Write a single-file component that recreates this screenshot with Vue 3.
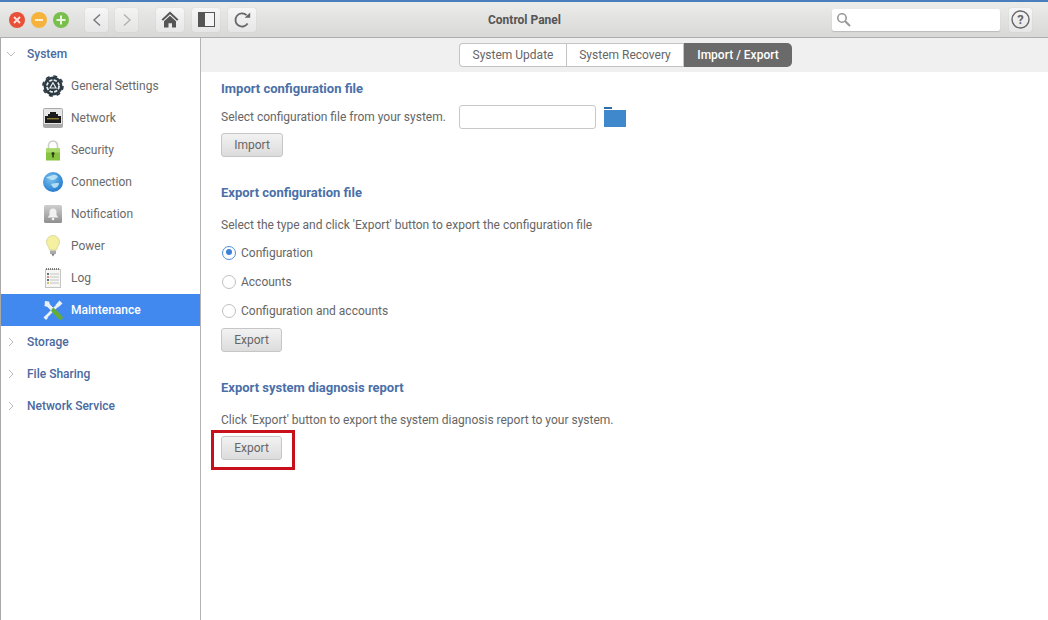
<script setup>
const items = [
  { key: 'gear', label: 'General Settings' },
  { key: 'net', label: 'Network' },
  { key: 'lock', label: 'Security' },
  { key: 'globe', label: 'Connection' },
  { key: 'bell', label: 'Notification' },
  { key: 'bulb', label: 'Power' },
  { key: 'log', label: 'Log' },
  { key: 'tools', label: 'Maintenance', active: true },
]
const groups = ['Storage', 'File Sharing', 'Network Service']
const radios = [
  { label: 'Configuration', on: true },
  { label: 'Accounts', on: false },
  { label: 'Configuration and accounts', on: false },
]
</script>

<template>
  <div class="app">
    <header class="top">
      <div class="lights">
        <svg width="16" height="16" viewBox="0 0 16 16"><circle cx="8" cy="8" r="8" fill="#e8503a"/><path d="M5 5l6 6M11 5l-6 6" stroke="#fbe3dd" stroke-width="1.800"/></svg>
        <svg width="16" height="16" viewBox="0 0 16 16"><circle cx="8" cy="8" r="8" fill="#f5b33c"/><path d="M4 8h8" stroke="#fdf0d2" stroke-width="2"/></svg>
        <svg width="16" height="16" viewBox="0 0 16 16"><circle cx="8" cy="8" r="8" fill="#79bf4c"/><path d="M3.500 8h9M8 3.500v9" stroke="#eaf6df" stroke-width="2"/></svg>
      </div>
      <div class="tool nav first"><svg width="10" height="14" viewBox="0 0 10 14"><path d="M8 1.500L2 7l6 5.500" fill="none" stroke="#777" stroke-width="1.400"/></svg></div>
      <div class="tool nav second"><svg width="10" height="14" viewBox="0 0 10 14"><path d="M2 1.500L8 7l-6 5.500" fill="none" stroke="#aaa" stroke-width="1.400"/></svg></div>
      <div class="tool wide home"><svg width="18" height="17" viewBox="0 0 18 17"><path d="M9 0.500L0.500 8.500 2 9.800 9 3.300l7 6.500 1.500-1.300z" fill="#555"/><path d="M3 10.200L9 4.800l6 5.400V16.500h-4v-4.200H7.500v4.200H3z" fill="#555"/></svg></div>
      <div class="tool wide"><svg width="17" height="15" viewBox="0 0 17 15"><rect x="0" y="0" width="17" height="15" fill="#555"/><rect x="7" y="1" width="9" height="13" fill="#f4f4f4"/></svg></div>
      <div class="tool wide"><svg width="17" height="16" viewBox="0 0 17 16"><path d="M13.600 11.600A6.600 6.600 0 1 1 12.600 3.200" fill="none" stroke="#666" stroke-width="1.800"/><path d="M10.600 5.800h5.600V0.400z" fill="#666"/></svg></div>
      <div class="title">Control Panel</div>
      <div class="search">
        <svg width="15" height="15" viewBox="0 0 15 15"><circle cx="6" cy="6" r="4.200" fill="none" stroke="#999" stroke-width="1.600"/><path d="M9.200 9.200L14 14" stroke="#999" stroke-width="2"/></svg>
      </div>
      <div class="tool help"><svg width="19" height="19" viewBox="0 0 19 19"><circle cx="9.500" cy="9.500" r="8.500" fill="none" stroke="#666" stroke-width="1.400"/><text x="9.500" y="13.800" text-anchor="middle" class="q">?</text></svg></div>
    </header>

    <div class="body">
      <aside class="side">
        <div class="group">
          <svg class="chev" width="10" height="10" viewBox="0 0 10 10"><path d="M1 3l4 4 4-4" fill="none" stroke="#bbb"/></svg>
          <span>System</span>
        </div>
        <div v-for="it in items" :key="it.key" class="item" :class="{ active: it.active }">
          <span class="ico">
            <svg v-if="it.key === 'gear'" width="22" height="22" viewBox="0 0 22 22">
              <circle cx="11" cy="11" r="9.500" fill="#2c3a44"/>
              <circle cx="11" cy="11" r="10" fill="none" stroke="#2c3a44" stroke-width="1.600" stroke-dasharray="4 3.850"/>
              <circle cx="11" cy="11" r="6" fill="none" stroke="#e8ecef" stroke-width="1.800" stroke-dasharray="3.300 1.410"/>
              <path d="M11 7.800l3 5.200H8z" fill="none" stroke="#e8ecef" stroke-width="1.200"/>
            </svg>
            <svg v-else-if="it.key === 'net'" width="20" height="20" viewBox="0 0 20 20"><rect x="0.500" y="0.500" width="19" height="19" rx="1" fill="#e6e6e6" stroke="#aaa"/><path d="M2 8h3V6h2V4h6v2h2v2h3v7H2z" fill="#1b1b1b"/><rect x="4" y="10" width="12" height="1.400" fill="#8c7a32"/><rect x="1" y="16" width="18" height="3" fill="#a8a8a8"/></svg>
            <svg v-else-if="it.key === 'lock'" width="16" height="21" viewBox="0 0 16 21"><path d="M3.500 9V5.500a4.500 4.500 0 0 1 9 0V9" fill="none" stroke="#c9cfc4" stroke-width="1.600"/><rect x="1" y="8.500" width="14" height="12" fill="#86c341"/><rect x="1" y="8.500" width="14" height="4" fill="#a9d96a"/><circle cx="8" cy="13.500" r="1.500" fill="#2c3a18"/><rect x="7.200" y="14" width="1.600" height="3.500" fill="#2c3a18"/></svg>
            <svg v-else-if="it.key === 'globe'" width="20" height="20" viewBox="0 0 20 20"><defs><radialGradient id="gl" cx=".4" cy=".35" r=".7"><stop offset="0" stop-color="#7cc4ee"/><stop offset="1" stop-color="#1f78cf"/></radialGradient></defs><circle cx="10" cy="10" r="10" fill="url(#gl)"/><path d="M3 6c2-2 5-2 7-3 2-.5 4 0 5 2-2 1-3 3-5 3-3 0-4-2-7-2zM8 12c2-1 5-1 8-1 0 3-2 4-4 5-2 0-3-2-4-4z" fill="#c6e8f6" opacity=".85"/></svg>
            <svg v-else-if="it.key === 'bell'" width="18" height="18" viewBox="0 0 18 18"><defs><linearGradient id="bellg" x1="0" y1="0" x2="0" y2="1"><stop offset="0" stop-color="#cfcfcf"/><stop offset="1" stop-color="#8f8f8f"/></linearGradient></defs><rect width="18" height="18" rx="1.500" fill="url(#bellg)"/><path d="M9 3.500a3.500 3.500 0 0 1 3.500 3.500v3l1.800 2.500H3.700L5.500 10V7A3.500 3.500 0 0 1 9 3.500z" fill="#f2f2f2"/><circle cx="9" cy="14" r="1.300" fill="#f2f2f2"/></svg>
            <svg v-else-if="it.key === 'bulb'" width="14" height="22" viewBox="0 0 14 22"><path d="M7 0.500a6.500 6.500 0 0 1 6.500 6.500c0 3-2.500 4.500-3 8h-7c-.5-3.500-3-5-3-8A6.500 6.500 0 0 1 7 .5z" fill="#f4f0a0" stroke="#cfcd8a" stroke-width=".7"/><rect x="4" y="15.500" width="6" height="3.500" fill="#aaa"/><path d="M5.500 19h3l-1.500 2.500z" fill="#777"/></svg>
            <svg v-else-if="it.key === 'log'" width="16" height="20" viewBox="0 0 16 20"><rect x="0.500" y="1.500" width="15" height="18" fill="#f6f6f2" stroke="#c5c5c5"/><path d="M1 1h14" stroke="#777" stroke-dasharray="1 1" stroke-width="2"/><path d="M5 6h9M5 9h9M5 12h9M5 15h9" stroke="#c4c4c4"/><path d="M2 6h2" stroke="#345" stroke-width="1.500"/><path d="M2 9h2" stroke="#c66" stroke-width="1.500"/><path d="M2 12h2" stroke="#345" stroke-width="1.500"/><path d="M2 15h2" stroke="#ca3" stroke-width="1.500"/></svg>
            <svg v-else width="22" height="22" viewBox="0 0 22 22">
              <path d="M3 2l4 .5 1 3 5 5-2.500 2.500-5-5-3-1z" fill="#eaf1f5"/>
              <path d="M3.500 18.500L15 7" stroke="#eaf1f5" stroke-width="2.600"/>
              <path d="M13.500 6l4-4.500 3 3-4.500 4z" fill="#eaf1f5"/>
              <path d="M1.500 18.500l2-2 2.500 2.500-2 2z" fill="#eaf1f5"/>
              <path d="M11.500 11.500L18.500 18.500" stroke="#62ad35" stroke-width="4.500" stroke-linecap="round"/>
            </svg>
          </span>
          <span>{{ it.label }}</span>
        </div>
        <div v-for="g in groups" :key="g" class="group">
          <svg class="chev" width="10" height="10" viewBox="0 0 10 10"><path d="M3 1l4 4-4 4" fill="none" stroke="#bbb"/></svg>
          <span>{{ g }}</span>
        </div>
      </aside>

      <main class="main">
        <div class="tabbar">
          <div class="tabs">
            <div class="tab t1">System Update</div>
            <div class="tab t2">System Recovery</div>
            <div class="tab t3">Import / Export</div>
          </div>
        </div>
        <div class="content">
          <h2 class="h h1">Import configuration file</h2>
          <div class="filerow">
            <span class="txt">Select configuration file from your system.</span>
            <span class="field"></span>
            <svg width="22" height="20" viewBox="0 0 22 20"><rect x="0" y="0" width="8" height="2" fill="#2f6ca8"/><rect x="0" y="3" width="22" height="17" fill="#3f88cc"/></svg>
          </div>
          <button class="btn wide-b">Import</button>

          <h2 class="h h2">Export configuration file</h2>
          <p class="txt p1">Select the type and click 'Export' button to export the configuration file</p>
          <label v-for="r in radios" :key="r.label" class="radio">
            <span class="dot" :class="{ on: r.on }"></span>
            <span class="txt">{{ r.label }}</span>
          </label>
          <button class="btn b2">Export</button>

          <h2 class="h h3">Export system diagnosis report</h2>
          <p class="txt p2">Click 'Export' button to export the system diagnosis report to your system.</p>
          <div class="marked">
            <button class="btn">Export</button>
            <span class="redbox"></span>
          </div>
        </div>
      </main>
    </div>
  </div>
</template>

<style>
html, body { margin: 0; background: #fff; }
</style>

<style scoped>
.app {
  width: 1048px;
  height: 620px;
  overflow: hidden;
  display: flex;
  flex-direction: column;
  font-family: Roboto, "Liberation Sans", sans-serif;
  font-size: 12px;
  color: #666;
}
.top {
  flex: none;
  border-top: 2px solid #4a7fbd;
  border-bottom: 1px solid #aeaeae;
  box-sizing: content-box;
  height: 35px;
  background: linear-gradient(#ececea, #d8d8d6);
  display: flex;
  align-items: center;
  position: relative;
}
.lights {
  display: flex;
  gap: 6px;
  margin-left: 9px;
  margin-right: 16px;
}
.tool {
  height: 24px;
  background: linear-gradient(#f6f6f6, #e6e6e6);
  border-radius: 3px;
  box-shadow: 0 0 1px #bbb;
  display: flex;
  align-items: center;
  justify-content: center;
  flex: none;
}
.nav { width: 23px; }
.second { margin-left: 7px; opacity: 0.85; }
.wide { width: 28px; margin-left: 8px; }
.home { margin-left: 18px; }
.title {
  position: absolute;
  left: 1px;
  right: 0;
  text-align: center;
  font-weight: 700;
  font-size: 12px;
  color: #555;
  pointer-events: none;
}
.search {
  margin-left: auto;
  width: 168px;
  height: 22px;
  background: #fff;
  border-radius: 2px;
  box-shadow: 0 1px 1px #bbb;
  display: flex;
  align-items: center;
  padding-left: 4px;
  box-sizing: border-box;
}
.help { width: 23px; margin-left: 9px; margin-right: 16px; }
.q { font: 700 13px Roboto, sans-serif; fill: #666; }
.body { flex: 1; display: flex; min-height: 0; }
.side {
  width: 200px;
  flex: none;
  box-sizing: border-box;
  border-left: 1px solid #a8a8a8;
}
.group {
  height: 32px;
  display: flex;
  align-items: center;
  color: #4a6a9f;
  font-weight: 500;
}
.chev { margin-left: 5px; margin-right: 11px; flex: none; }
.item {
  height: 32px;
  display: flex;
  align-items: center;
  color: #6a6a6a;
}
.ico {
  width: 24px;
  margin-left: 40px;
  margin-right: 6px;
  display: flex;
  align-items: center;
  justify-content: center;
  flex: none;
}
.item.active { background: #4289ef; color: #fff; font-weight: 500; }
.main {
  flex: 1;
  min-width: 0;
  border-left: 1px solid #b4b4b4;
  display: flex;
  flex-direction: column;
}
.tabbar {
  height: 34px;
  flex: none;
  background: #f0f0f0;
  display: flex;
  align-items: center;
  padding-left: 258px;
}
.tabs { display: flex; height: 24px; }
.tab {
  display: flex;
  align-items: center;
  justify-content: center;
  box-sizing: border-box;
  background: #fff;
  border: 1px solid #c4c4c4;
  color: #666;
}
.t1 { width: 107px; border-radius: 4px 0 0 4px; border-right: 0; }
.t2 { width: 118px; }
.t3 {
  width: 108px;
  border: 0;
  border-radius: 0 5px 5px 0;
  background: #6a6a6a;
  color: #fff;
  font-weight: 500;
}
.content { padding-left: 20px; display: flex; flex-direction: column; align-items: flex-start; }
.h {
  margin: 0;
  font-size: 13px;
  line-height: 16px;
  font-weight: 700;
  color: #4a6fa8;
}
.h1 { margin-top: 9px; }
.filerow { display: flex; align-items: center; height: 24px; margin-top: 8px; }
.filerow svg { margin-left: 8px; }
.txt { color: #666; line-height: 16px; margin: 0; }
.field {
  width: 137px;
  height: 24px;
  box-sizing: border-box;
  margin-left: 13px;
  background: #fff;
  border: 1px solid #c8c8c8;
  border-radius: 3px;
}
.btn {
  width: 61px;
  height: 24px;
  padding: 0;
  box-sizing: border-box;
  border: 1px solid #c6c6c6;
  border-radius: 3px;
  background: linear-gradient(#f2f2f2, #dcdcdc);
  color: #666;
  font: inherit;
  display: block;
}
.wide-b { margin-top: 4px; width: 62px; }
.h2 { margin-top: 28px; }
.p1 { margin-top: 16px; }
.radio { display: flex; align-items: center; height: 29px; margin-left: 1px; }
.radio:first-of-type { margin-top: 5px; }
.dot {
  width: 14px;
  height: 14px;
  box-sizing: border-box;
  border-radius: 50%;
  border: 1px solid #c0c0c0;
  background: #fff;
  margin-right: 5px;
  flex: none;
  position: relative;
}
.dot.on { border: 1.5px solid #4f8fd8; }
.dot.on::after {
  content: "";
  position: absolute;
  left: 2.5px;
  top: 2.5px;
  width: 6px;
  height: 6px;
  border-radius: 50%;
  background: #3d82d6;
}
.b2 { margin-top: 3px; }
.h3 { margin-top: 28px; }
.p2 { margin-top: 16px; }
.marked { position: relative; margin-top: 8px; }
.redbox {
  position: absolute;
  left: -10px;
  top: -6px;
  width: 84px;
  height: 40px;
  box-sizing: border-box;
  border: 3px solid #c8101c;
}
</style>
